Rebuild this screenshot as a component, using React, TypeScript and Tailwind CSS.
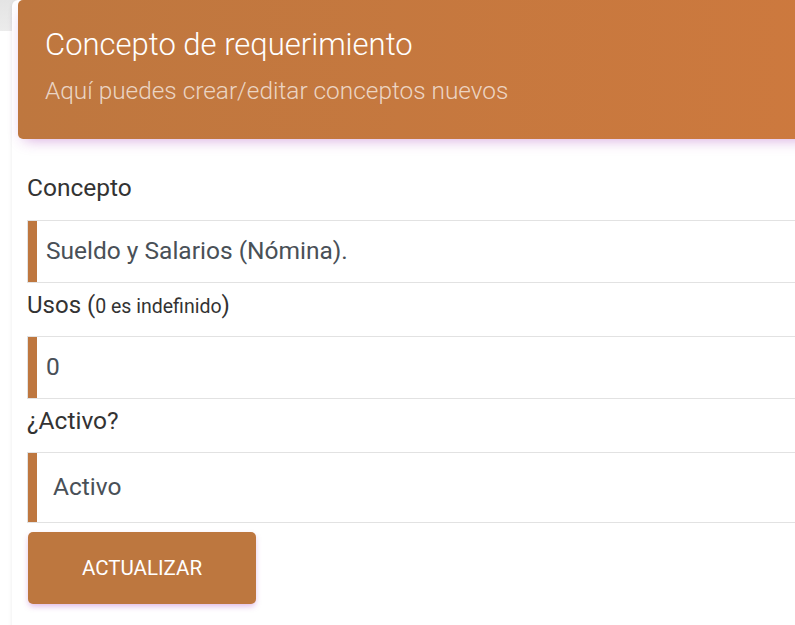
import React from "react";

function Field({
  value,
  h,
  pl,
}: {
  value: string;
  h: string;
  pl: string;
}) {
  return (
    <div className={`flex ${h} border-y border-l border-[#e2e2e2] bg-white`}>
      <div className="w-[9px] bg-[#be773f]" />
      <div className={`flex items-center ${pl} text-[24.5px] text-[#495057]`}>{value}</div>
    </div>
  );
}

export default function App() {
  return (
    <div className="relative h-[625px] w-[795px] overflow-hidden bg-white font-['Roboto',sans-serif]">
      <div className="h-[31px] w-full bg-gradient-to-b from-[#e4e4e4] to-[#ececec]" />
      <div className="ml-[12px] w-[820px] rounded-[6px] bg-white shadow-[0_1px_4px_0_rgba(0,0,0,0.08)]">
        <div className="-mt-[31px] ml-[6px] h-[139px] rounded-[5px] bg-gradient-to-r from-[#be773f] to-[#cd793e] pl-[27px] pt-[26px] shadow-[0_6px_14px_-6px_rgba(156,39,176,0.45)]">
          <div className="text-[31px] font-light leading-[38px] text-white">Concepto de requerimiento</div>
          <div className="mt-[12px] text-[24.4px] font-light leading-[30px] text-white/70">
            Aquí puedes crear/editar conceptos nuevos
          </div>
        </div>
        <div className="px-[15px] pb-[60px]">
          <div className="mt-[35px] mb-[18px] h-[28px] text-[24.5px] leading-[28px] text-[#333]">Concepto</div>
          <Field value="Sueldo y Salarios (Nómina)." h="h-[63px]" pl="pl-[9px]" />
          <div className="mt-[8px] mb-[17px] h-[28px] text-[24px] leading-[28px] text-[#333]">
            Usos (<span className="text-[19.5px] leading-none">0 es indefinido</span>)
          </div>
          <Field value="0" h="h-[63px]" pl="pl-[9px]" />
          <div className="mt-[8px] mb-[17px] h-[28px] text-[24.5px] leading-[28px] text-[#333]">¿Activo?</div>
          <Field value="Activo" h="h-[71px]" pl="pl-[16px]" />
          <button className="ml-[1px] mt-[9px] flex h-[72px] w-[228px] items-center justify-center rounded-[5px] bg-[#bd773f] text-[20.5px] font-normal text-white shadow-[0_3px_6px_-1px_rgba(156,39,176,0.35)]">
            ACTUALIZAR
          </button>
        </div>
      </div>
    </div>
  );
}
